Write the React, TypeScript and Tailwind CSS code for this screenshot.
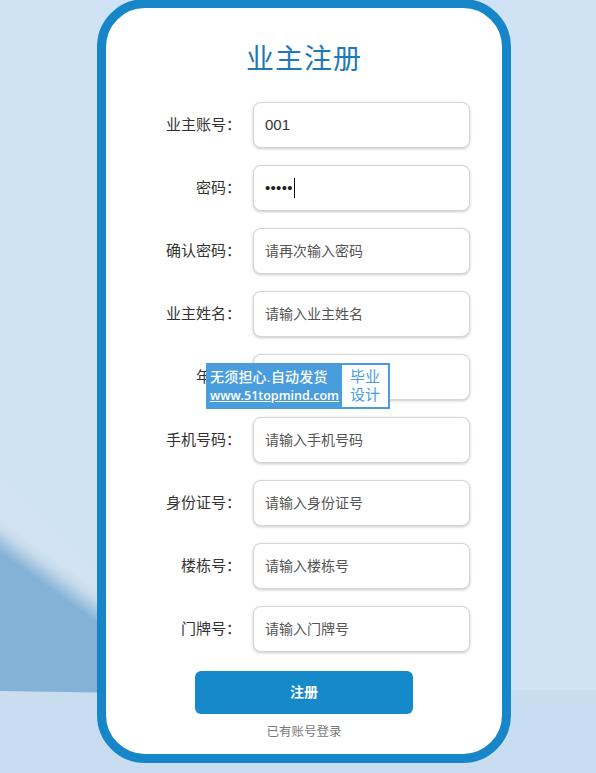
import React from 'react';

const fields = [
  { label: '业主账号：', value: '001' },
  { label: '密码：', value: '•••••', caret: true },
  { label: '确认密码：', placeholder: '请再次输入密码' },
  { label: '业主姓名：', placeholder: '请输入业主姓名' },
  { label: '年龄：', placeholder: '请输入年龄' },
  { label: '手机号码：', placeholder: '请输入手机号码' },
  { label: '身份证号：', placeholder: '请输入身份证号' },
  { label: '楼栋号：', placeholder: '请输入楼栋号' },
  { label: '门牌号：', placeholder: '请输入门牌号' },
];

const Backdrop: React.FC = () => (
  <svg className="absolute inset-0" width="596" height="773" viewBox="0 0 596 773">
    <defs>
      <linearGradient id="slope" gradientUnits="userSpaceOnUse" x1="54" y1="558" x2="38" y2="580">
        <stop offset="0" stopColor="#d2e4f3" />
        <stop offset="0.35" stopColor="#c4d9ea" />
        <stop offset="1" stopColor="#84b2d7" />
      </linearGradient>
    </defs>
    <rect x="0" y="690" width="596" height="83" fill="#c8ddf0" />
    <polygon points="0,480 130,600 130,693 0,691" fill="url(#slope)" />
  </svg>
);

const Watermark: React.FC = () => (
  <div className="absolute left-[206px] top-[363px] w-[184px] h-[46px] bg-[#4a9ddd] flex items-center pl-[4px] pr-[2px] gap-[3px]">
    <div className="flex flex-col text-white leading-none">
      <span className="text-[14px] font-medium tracking-[0.2px]">无须担心.自动发货</span>
      <span className="text-[12.5px] underline mt-[6px] font-['Open_Sans',sans-serif] font-semibold">www.51topmind.com</span>
    </div>
    <div className="flex-1 h-[42px] bg-white flex flex-col items-center justify-center text-[#4a9ddd] text-[15px] leading-[18px]">
      <span>毕业</span>
      <span>设计</span>
    </div>
  </div>
);

export default function App() {
  return (
    <div className="relative w-full h-[773px] overflow-hidden bg-[#d0e3f4] font-['Liberation_Sans','Noto_Sans_CJK_SC',sans-serif]">
      <Backdrop />
      <div className="relative ml-[97px] -mt-[1px] w-[414px] h-[764px] rounded-[48px] border-[9px] border-[#1686c8] bg-white flex flex-col items-center">
        <h1 className="mt-[35px] text-[28px] leading-[34px] text-[#1f79b6] font-normal tracking-[1px]">业主注册</h1>

        <div className="mt-[25px] flex flex-col gap-[17px] self-start">
          {fields.map((f) => (
            <div key={f.label} className="flex items-center">
              <label className="w-[135px] text-right text-[15px] text-[#333]">{f.label}</label>
              <div className="ml-[12px] w-[217px] h-[46px] rounded-lg border border-[#d6d6d6] bg-white shadow-[0_1px_3px_rgba(0,0,0,0.22)] flex items-center px-[11px]">
                {f.value !== undefined ? (
                  <span className="flex items-center text-[15px] text-[#333]">
                    {f.caret ? <span className="text-[15px] tracking-[0.3px] text-[#222]">{f.value}</span> : f.value}
                    {f.caret && <span className="ml-[1px] w-px h-[20px] bg-black" />}
                  </span>
                ) : (
                  <input
                    className="w-full bg-transparent outline-none text-[14px] text-[#333] placeholder:text-[#555]"
                    placeholder={f.placeholder}
                  />
                )}
              </div>
            </div>
          ))}
        </div>

        <button className="mt-[19px] w-[218px] h-[43px] rounded-md bg-[#1589c9] text-white text-[14px] font-bold">
          注册
        </button>
        <a className="mt-[9px] text-[12.5px] leading-[18px] text-[#7a7a7a]">已有账号登录</a>
      </div>
      <Watermark />
    </div>
  );
}
